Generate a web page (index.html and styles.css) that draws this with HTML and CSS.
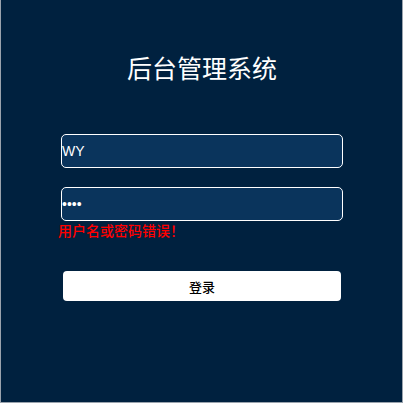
FILE: index.html
```html
<!DOCTYPE html>
<html lang="zh">
<head>
<meta charset="utf-8">
<title>后台管理系统</title>
<link rel="stylesheet" href="styles.css">
</head>
<body>
<div class="page">
  <h1 class="title">后台管理系统</h1>
  <form class="login-form">
    <input class="field" type="text" value="WY">
    <input class="field field-pass" type="password" value="1234">
    <div class="error">用户名或密码错误！</div>
    <button class="submit" type="button">登录</button>
  </form>
</div>
</body>
</html>
```

FILE: styles.css
```css
html, body {
  margin: 0;
  padding: 0;
  background: #00213f;
}
.page {
  box-sizing: border-box;
  width: 403px;
  height: 403px;
  background: #00213f;
  border-left: 1px solid #9aa3ad;
  border-right: 1px solid #9aa3ad;
  border-bottom: 1px solid #9aa3ad;
  padding: 52px 59px 0 60px;
  font-family: "Noto Sans CJK SC", "Noto Sans", sans-serif;
}
.title {
  margin: 0;
  height: 30px;
  line-height: 30px;
  font-size: 25px;
  font-weight: 400;
  color: #ffffff;
  text-align: center;
}
.login-form {
  display: flex;
  flex-direction: column;
  margin-top: 52px;
}
.field {
  box-sizing: border-box;
  width: 282px;
  height: 34px;
  margin: 0;
  padding: 0;
  border: 1px solid #ffffff;
  border-radius: 5px;
  background: #0a345c;
  color: #ffffff;
  font-family: "Liberation Sans", "Noto Sans CJK SC", sans-serif;
  font-size: 14px;
  outline: none;
}
.field-pass {
  margin-top: 19px;
}
.error {
  margin-left: -3px;
  height: 18px;
  line-height: 18px;
  font-size: 14px;
  font-weight: 500;
  color: #ff0000;
}
.submit {
  box-sizing: border-box;
  width: 278px;
  height: 30px;
  margin: 32px 0 0 2px;
  padding: 0;
  border: none;
  border-radius: 4px;
  background: #ffffff;
  color: #000000;
  font-family: "Noto Sans CJK SC", sans-serif;
  font-size: 13px;
  font-weight: 500;
}
```
